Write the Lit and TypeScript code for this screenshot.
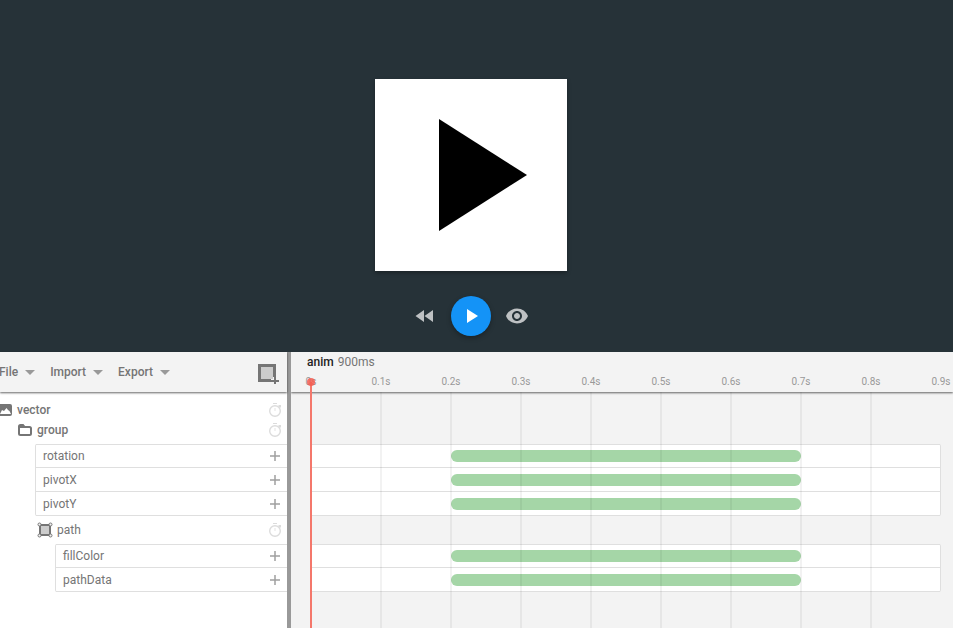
import { LitElement, html, css, svg } from "lit";
import { customElement } from "lit/decorators.js";

interface Layer { name: string; kind: "vector" | "group" | "path"; depth: number; props: string[] }

const LAYERS: Layer[] = [
  { name: "vector", kind: "vector", depth: 0, props: [] },
  { name: "group", kind: "group", depth: 1, props: ["rotation", "pivotX", "pivotY"] },
  { name: "path", kind: "path", depth: 2, props: ["fillColor", "pathData"] },
];
const DURATION = 900;
const BLOCK = { start: 200, end: 700 };
const PX_PER_MS = 0.7;
const TICKS = Array.from({ length: DURATION / 100 + 1 }, (_, i) => i);

const ICONS = {
  vector: svg`<path fill-rule="evenodd" d="M3 2h10a2 2 0 0 1 2 2v8a2 2 0 0 1-2 2H3a2 2 0 0 1-2-2V4a2 2 0 0 1 2-2zM3 12h11l-1.500-3-1.500-1-1.500-2-2.500 3-2-1z"/>`,
  group: svg`<path d="M2 4.500Q2 3 3.500 3H6l1.500 2h5Q14 5 14 6.500v5Q14 13 12.500 13h-9Q2 13 2 11.500z" fill="none" stroke="currentColor" stroke-width="2"/><path d="M2 3h5l1.500 3H2z"/>`,
  path: svg`<path d="M3 3h10v10H3z" fill="#ccc" stroke="currentColor" stroke-width="2"/><g fill="#f3f3f3" stroke="currentColor"><circle cx="2.500" cy="2.500" r="1.500"/><circle cx="13.500" cy="2.500" r="1.500"/><circle cx="2.500" cy="13.500" r="1.500"/><circle cx="13.500" cy="13.500" r="1.500"/></g>`,
};

@customElement("app-stage")
class AppStage extends LitElement {
  static styles = css`
    :host { display: flex; flex-direction: column; align-items: center; gap: 25px;
      padding: 79px 11px 16px 0; background: #263238; }
    .artwork { width: 192px; height: 192px; background: #fff; box-shadow: 0 2px 4px rgba(0,0,0,.3); }
    .artwork svg { display: block; }
    .controls { display: flex; align-items: center; gap: 14px; }
    button { display: grid; place-items: center; width: 24px; height: 24px; padding: 0; border: 0;
      background: none; color: #bec1c3; }
    .play { width: 40px; height: 40px; border-radius: 50%; background: #1493f7; color: #fff;
      box-shadow: 0 2px 5px rgba(0,0,0,.3); }
    button svg { fill: currentColor; }
  `;
  render() {
    return html`
      <div class="artwork"><svg width="192" height="192" viewBox="0 0 24 24"><path d="M8 5v14l11-7z"/></svg></div>
      <div class="controls">
        <button aria-label="Rewind"><svg width="24" height="24" viewBox="0 0 24 24"><path d="M11 18V6L2.500 12zm.5-6 8.500 6V6z"/></svg></button>
        <button class="play" aria-label="Play"><svg width="24" height="24" viewBox="0 0 24 24"><path d="M8 5v14l11-7z"/></svg></button>
        <button aria-label="Preview"><svg width="24" height="24" viewBox="0 0 24 24"><path d="M12 4.500C7 4.500 2.730 7.610 1 12c1.730 4.390 6 7.500 11 7.500s9.270-3.110 11-7.500c-1.730-4.390-6-7.500-11-7.500zM12 17c-2.760 0-5-2.240-5-5s2.240-5 5-5 5 2.240 5 5-2.240 5-5 5zm0-8c-1.660 0-3 1.340-3 3s1.340 3 3 3 3-1.340 3-3-1.340-3-3-3z"/></svg></button>
      </div>`;
  }
}

@customElement("layer-tree")
class LayerTree extends LitElement {
  static styles = css`
    :host { display: flex; flex-direction: column; background: #fff; color: #757575; font-size: 12px; line-height: 20px; }
    header { display: flex; align-items: center; height: 40px; background: #f3f3f3; position: relative;
      box-shadow: 0 1px 2px rgba(0,0,0,.6); font-weight: 500; }
    nav { display: flex; gap: 12px; flex: 1; margin-left: -1px; }
    button { display: flex; align-items: center; padding: 0; border: 0; background: none; color: inherit; font: inherit; }
    .menu { gap: 4px; }
    .menu svg { fill: #999; }
    .add { margin-right: 7px; }
    .tree { padding: 8px 0; }
    .layer { display: flex; align-items: center; gap: 4px; height: 20px; padding-right: 4px; }
    .layer svg { fill: currentColor; }
    .layer .name { flex: 1; }
    .strong { font-weight: 500; }
    .d0 { margin-left: -3px; }
    .d1 { margin-left: 17px; }
    .d2 { margin-left: 37px; }
    .watch { color: #dcdcdc; }
    ul { list-style: none; margin-top: 4px; margin-bottom: 4px; padding: 0; border-left: 1px solid #dfdfdf; border-radius: 2px 0 0 2px; }
    .p1 { margin-left: 35px; }
    .p2 { margin-left: 55px; }
    li { display: flex; align-items: center; justify-content: space-between; box-sizing: border-box; height: 24px;
      padding: 0 4px 0 7px; border-bottom: 1px solid #dfdfdf; }
    li:first-child { border-top: 1px solid #dfdfdf; }
    li button { color: #a0a0a0; }
  `;
  render() {
    return html`
      <header>
        <nav>${["File", "Import", "Export"].map((m) => html`<button class="menu">${m}<svg width="16" height="16" viewBox="0 0 16 16"><path d="M3 6h10l-5 5z"/></svg></button>`)}</nav>
        <button class="add" aria-label="Add layer"><svg width="24" height="24" viewBox="0 0 24 24"><path d="M3.500 5.500h15v15h-15z" fill="#ccc" stroke="#757575" stroke-width="3"/><path d="M15 21h9M19 17v7" stroke="#f3f3f3" stroke-width="4"/><path d="M19 17v8M15 21h8" stroke="#757575" stroke-width="2"/></svg></button>
      </header>
      <div class="tree">${LAYERS.map((l) => html`
        <div class="layer d${l.depth}">
          <svg width="16" height="16" viewBox="0 0 16 16">${ICONS[l.kind]}</svg>
          <span class="name ${l.kind === "path" ? "" : "strong"}">${l.name}</span>
          <button class="watch" aria-label="Animate ${l.name}"><svg width="16" height="16" viewBox="0 0 16 16"><circle cx="8" cy="9" r="5.300" fill="none" stroke="currentColor" stroke-width="1.400"/><path d="M6 1h4v1H6zM12 3h2v2l-1 1-2-2z"/><path d="M7 6h2v3H7z" opacity=".4"/></svg></button>
        </div>
        ${l.props.length ? html`<ul class="p${l.depth}">${l.props.map((p) => html`<li>${p}
          <button aria-label="Add ${p} block"><svg width="16" height="16" viewBox="0 0 16 16"><path d="M8 3v10M3 8h10" stroke="currentColor" stroke-width="1.500"/></svg></button></li>`)}</ul>` : ""}`)}
      </div>`;
  }
}

@customElement("time-line")
class TimeLine extends LitElement {
  static styles = css`
    :host { display: flex; flex-direction: column; position: relative; background: #f3f3f3; overflow: hidden; color: #757575; font-size: 12px; }
    header { height: 40px; position: relative; box-shadow: 0 1px 2px rgba(0,0,0,.6); line-height: 20px; }
    .title { display: flex; gap: 4px; padding-left: 16px; }
    .title strong { font-weight: 500; color: #222; }
    .ruler { display: flex; padding-left: 20px; font-size: 10px; color: #999; }
    .ruler span { flex: none; width: 70px; }
    .ruler b { display: block; width: 70px; margin-left: -35px; font-weight: 400; text-align: center; }
    .body { position: relative; flex: 1; padding: 8px 0 8px 20px; }
    .grid { position: absolute; top: 0; bottom: 0; width: 2px; margin-left: -1px; background: rgba(0,0,0,.05); }
    .space { height: 20px; }
    .group { margin: 4px 0; box-sizing: border-box; border-right: 1px solid #dfdfdf; border-radius: 0 2px 2px 0; background: #fff; }
    .track { display: flex; align-items: center; box-sizing: border-box; height: 24px; border-bottom: 1px solid #dfdfdf; }
    .track:first-child { border-top: 1px solid #dfdfdf; }
    .block { height: 12px; border-radius: 6px; background: #a5d6a7; position: relative; }
    .playhead { position: absolute; top: 30px; bottom: 0; left: 19px; width: 2px; background: #f4776b; }
    .playhead::before { content: ""; position: absolute; top: -4px; left: -3px; width: 8px; height: 8px; border-radius: 50%; background: rgba(244,92,80,.85); }
  `;
  render() {
    return html`
      <header>
        <div class="title"><strong>anim</strong><span>900ms</span></div>
        <div class="ruler">${TICKS.map((i) => html`<span><b>${i ? (i / 10).toFixed(1) : "0"}s</b></span>`)}</div>
      </header>
      <div class="body">
        ${LAYERS.map((l) => html`<div class="space"></div>
          ${l.props.length ? html`<div class="group" style="width:${DURATION * PX_PER_MS}px">${l.props.map(() => html`
            <div class="track"><div class="block" style="margin-left:${BLOCK.start * PX_PER_MS}px;width:${(BLOCK.end - BLOCK.start) * PX_PER_MS}px"></div></div>`)}</div>` : ""}`)}
        ${TICKS.slice(1, -1).map((i) => html`<div class="grid" style="left:${20 + Math.round(i * 100 * PX_PER_MS)}px"></div>`)}
      </div>
      <div class="playhead"></div>`;
  }
}

@customElement("app-root")
class AppRoot extends LitElement {
  static styles = css`
    :host { display: flex; flex-direction: column; min-height: 100vh; overflow: hidden; font-family: Roboto, "Liberation Sans", sans-serif; }
    .panel { display: grid; grid-template-columns: 287px 4px minmax(0, 1fr); flex: 1; }
    .splitter { background: #999; }
  `;
  render() {
    return html`<app-stage></app-stage>
      <div class="panel"><layer-tree></layer-tree><div class="splitter"></div><time-line></time-line></div>`;
  }
}
